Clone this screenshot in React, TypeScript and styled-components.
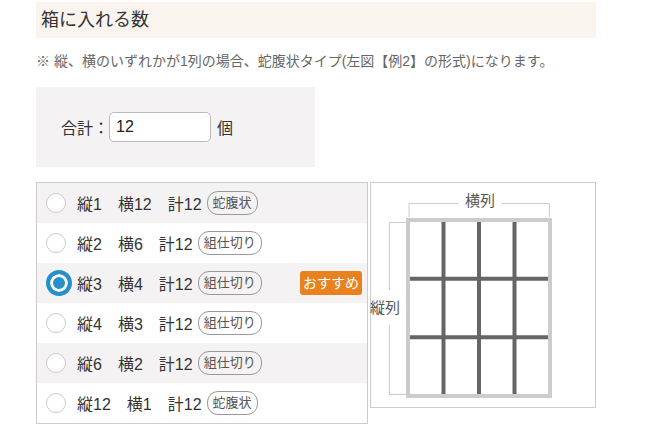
import React, { FC, useState } from "react";
import styled, { createGlobalStyle } from "styled-components";

interface Option {
  tate: number;
  yoko: number;
  type: string;
  recommended?: boolean;
}

const options: Option[] = [
  { tate: 1, yoko: 12, type: "蛇腹状" },
  { tate: 2, yoko: 6, type: "組仕切り" },
  { tate: 3, yoko: 4, type: "組仕切り", recommended: true },
  { tate: 4, yoko: 3, type: "組仕切り" },
  { tate: 6, yoko: 2, type: "組仕切り" },
  { tate: 12, yoko: 1, type: "蛇腹状" },
];

const GlobalStyle = createGlobalStyle`
  body {
    margin: 0;
    background: #fff;
    color: #333;
    font-family: "Liberation Sans", "Noto Sans CJK JP", sans-serif;
  }
`;

const Page = styled.div`
  width: 560px;
  padding: 2px 0 0 36px;
`;

const Heading = styled.h2`
  margin: 0;
  height: 36px;
  padding-left: 5px;
  background: #f9f5ee;
  font-size: 18px;
  font-weight: normal;
  line-height: 36px;
  color: #333;
`;

const Note = styled.p`
  margin: 13px 0 0;
  font-size: 14px;
  line-height: 20px;
  color: #666;
`;

const SumBox = styled.div`
  margin-top: 16px;
  width: 254px;
  height: 80px;
  padding-left: 25px;
  display: flex;
  align-items: center;
  background: #f4f2f2;
  font-size: 16px;
  color: #333;
`;

const SumInput = styled.input`
  box-sizing: border-box;
  width: 102px;
  height: 30px;
  padding: 0 6px;
  border: 1px solid #bbb;
  border-radius: 5px;
  font-family: inherit;
  font-size: 16px;
  color: #222;
  outline: none;
`;

const Unit = styled.span`
  margin-left: 6px;
`;

const Main = styled.div`
  margin-top: 15px;
  display: flex;
  align-items: flex-start;
  gap: 2px;
`;

const List = styled.div`
  width: 330px;
  border: 1px solid #ccc;
`;

const Row = styled.label<{ $shaded: boolean }>`
  height: 40px;
  padding: 0 5px 0 9px;
  display: flex;
  align-items: center;
  background: ${(p) => (p.$shaded ? "#f4f2f2" : "#fff")};
  font-size: 16px;
  color: #333;
  cursor: pointer;
`;

const Radio = styled.input`
  appearance: none;
  box-sizing: border-box;
  margin: 0 11px 0 0;
  width: 20px;
  height: 20px;
  border: 1px solid #ccc;
  border-radius: 50%;
  background: #fff;
  cursor: pointer;

  &:checked {
    width: 26px;
    height: 26px;
    margin-right: 5px;
    border: 4px solid #2790cc;
    background: #2790cc;
    box-shadow: inset 0 0 0 3px #fff;
  }
`;

const TypeTag = styled.span`
  margin-left: 5px;
  height: 22px;
  padding: 0 5px;
  border: 1px solid #999;
  border-radius: 11px;
  font-size: 13px;
  line-height: 22px;
  color: #555;
`;

const Recommend = styled.span`
  margin-left: auto;
  height: 24px;
  padding: 0 3px;
  border-radius: 3px;
  background: #e8821e;
  color: #fff;
  font-size: 14px;
  line-height: 24px;
`;

const Diagram = styled.div`
  width: 224px;
  height: 224px;
  border: 1px solid #ccc;
`;

const DiagramSvg = styled.svg`
  display: block;
  overflow: visible;
`;

const GridFigure: FC = () => (
  <DiagramSvg width="224" height="224" viewBox="1 1 224 224">
    {/* 横列 bracket */}
    <path d="M39 35 V21.5 H88 M132 21.5 H179.5 V35" fill="none" stroke="#ccc" strokeWidth="1" />
    <text x="110" y="24" textAnchor="middle" fontSize="15" fill="#555" fontFamily="Noto Sans CJK JP, sans-serif">
      横列
    </text>
    {/* 縦列 bracket */}
    <path d="M36 40.5 H19.5 V108 M19.5 143 V212.5 H36" fill="none" stroke="#ccc" strokeWidth="1" />
    <text x="15" y="131" textAnchor="middle" fontSize="15" fill="#555" fontFamily="Noto Sans CJK JP, sans-serif">
      縦列
    </text>
    {/* dividers */}
    <g stroke="#666" strokeWidth="4">
      <line x1="73.5" y1="40" x2="73.5" y2="212" />
      <line x1="109" y1="40" x2="109" y2="212" />
      <line x1="144.5" y1="40" x2="144.5" y2="212" />
      <line x1="40" y1="96.7" x2="178" y2="96.7" />
      <line x1="40" y1="155.3" x2="178" y2="155.3" />
    </g>
    <rect x="38" y="38" width="142" height="176" fill="none" stroke="#ccc" strokeWidth="4" />
  </DiagramSvg>
);

const App: FC = () => {
  const [total, setTotal] = useState("12");
  const [selected, setSelected] = useState(2);
  return (
    <Page>
      <GlobalStyle />
      <Heading>箱に入れる数</Heading>
      <Note>※ 縦、横のいずれかが1列の場合、蛇腹状タイプ(左図【例2】の形式)になります。</Note>
      <SumBox>
        合計：
        <SumInput value={total} onChange={(e) => setTotal(e.target.value)} />
        <Unit>個</Unit>
      </SumBox>
      <Main>
        <List>
          {options.map((o, i) => (
            <Row key={o.tate} $shaded={i % 2 === 0}>
              <Radio
                type="radio"
                name="layout"
                checked={selected === i}
                onChange={() => setSelected(i)}
              />
              縦{o.tate}　横{o.yoko}　計{o.tate * o.yoko}
              <TypeTag>{o.type}</TypeTag>
              {o.recommended && <Recommend>おすすめ</Recommend>}
            </Row>
          ))}
        </List>
        <Diagram>
          <GridFigure />
        </Diagram>
      </Main>
    </Page>
  );
};

export default App;
